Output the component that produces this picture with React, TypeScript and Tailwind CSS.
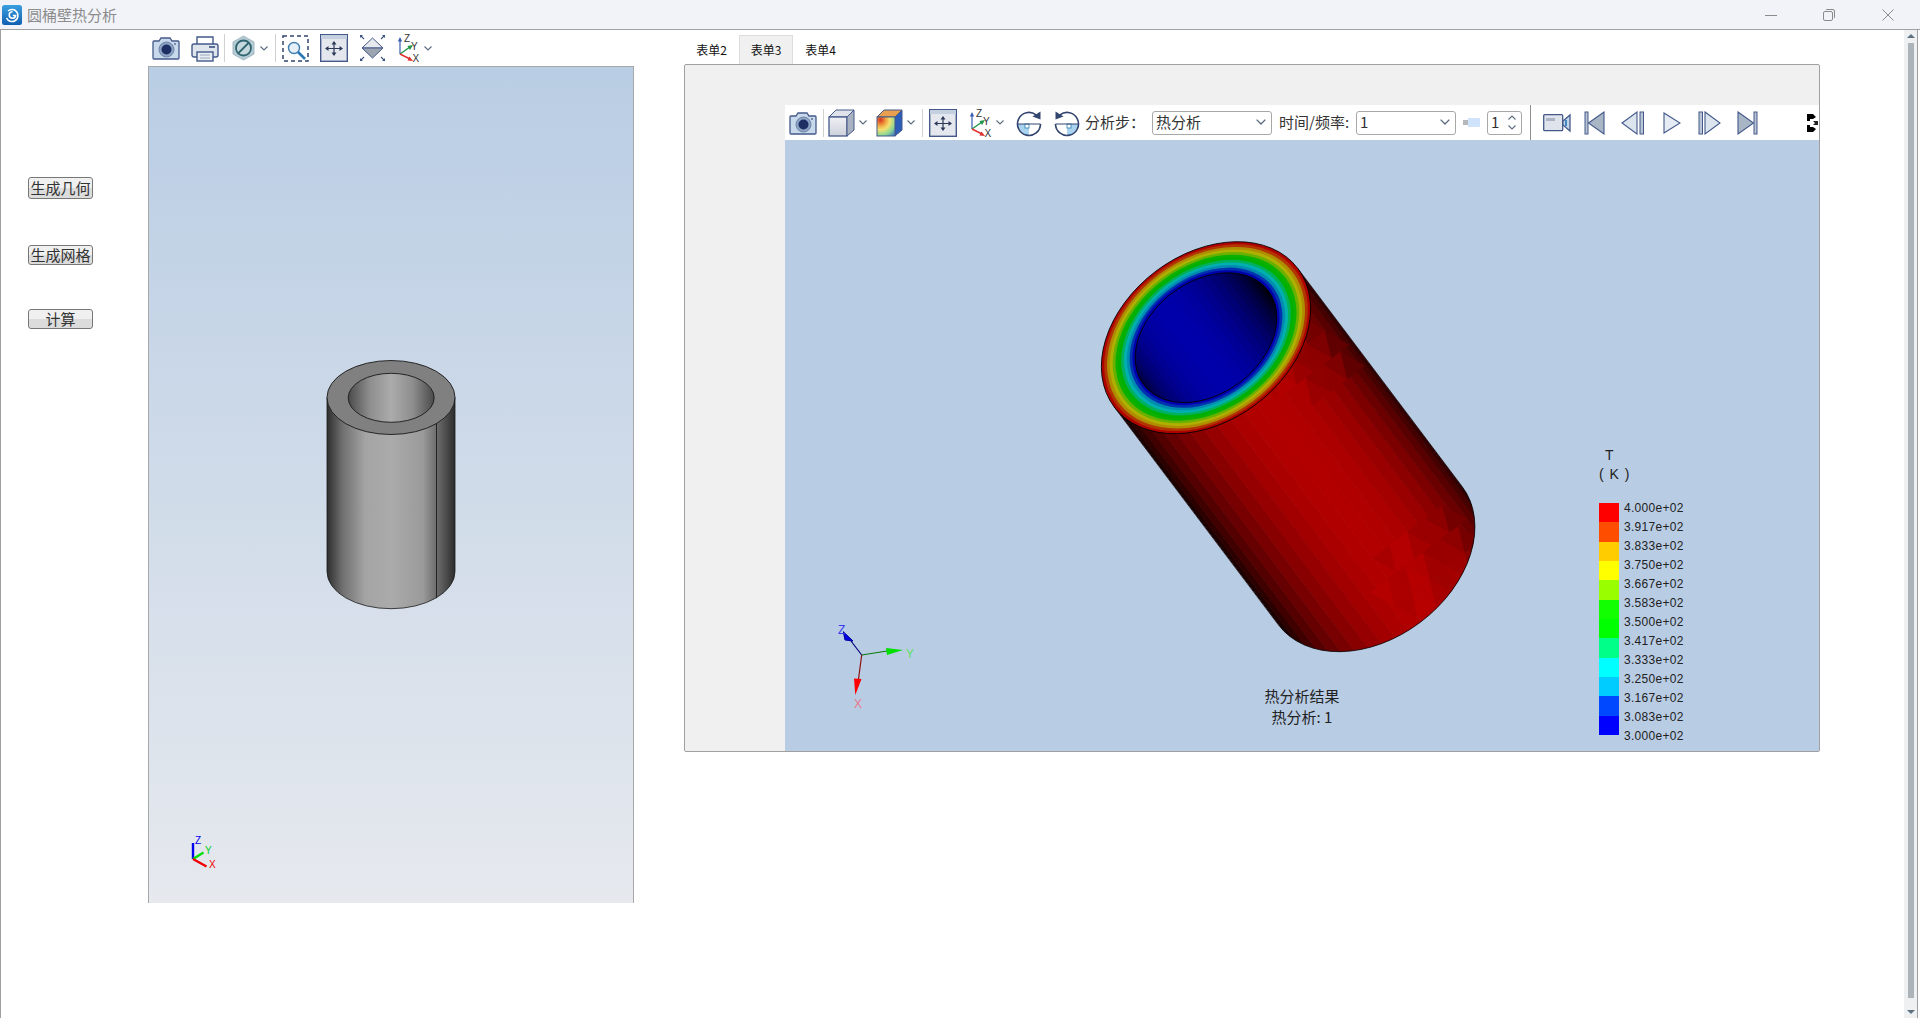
const NAVY = "#44598a"

function Chevron({ w = 8 }: { w?: number }) {
  return (
    <svg width={w} height={w * 0.625} viewBox="0 0 8 5" className="shrink-0">
      <path d="M0.5 0.5 L4 4 L7.5 0.5" fill="none" stroke="#5a6b80" strokeWidth="1.1" />
    </svg>
  )
}

function Sep() {
  return <div className="h-7 w-px shrink-0 bg-[#d0d0d0]" />
}

function Camera() {
  return (
    <svg width="28" height="24" viewBox="0 0 28 24" className="shrink-0">
      <path d="M2 5 H7 L9 2 H18 L20 5 H26 Q27 5 27 6 V22 Q27 23 26 23 H2 Q1 23 1 22 V6 Q1 5 2 5 Z" fill="#c9d9ec" stroke={NAVY} strokeWidth="1.3" />
      <circle cx="14.5" cy="13.5" r="7.5" fill="#8ea4c4" stroke="#6d83a8" />
      <circle cx="14.5" cy="13.5" r="5" fill="#1d2f63" />
      <circle cx="23" cy="8" r="1" fill="#5a7094" />
    </svg>
  )
}

function Printer() {
  return (
    <svg width="28" height="27" viewBox="0 0 28 27" className="shrink-0">
      <path d="M6 9 V2 H22 V9" fill="#fff" stroke={NAVY} strokeWidth="1.4" />
      <rect x="1" y="9" width="26" height="13" rx="2" fill="#dfe5ec" stroke={NAVY} strokeWidth="1.4" />
      <rect x="18" y="11" width="6" height="2" fill="#5a7094" />
      <rect x="6" y="17" width="16" height="9" fill="#e8edf2" stroke={NAVY} strokeWidth="1.4" />
      <path d="M9 20 H19 M9 23 H19" stroke="#9aa9bd" strokeWidth="1.2" />
    </svg>
  )
}

function Hex() {
  return (
    <svg width="23" height="26" viewBox="0 0 23 26" className="shrink-0">
      <path d="M11.5 1 L22 7 V19 L11.5 25 L1 19 V7 Z" fill="#b5cbd3" stroke="#a2bac4" />
      <circle cx="11.5" cy="13" r="7.5" fill="#c5d8de" stroke="#2f6470" strokeWidth="1.8" />
      <path d="M6.5 18 L16.5 8" stroke="#2f6470" strokeWidth="1.8" />
    </svg>
  )
}

function ZoomBox() {
  return (
    <svg width="27" height="27" viewBox="0 0 27 27" className="shrink-0">
      <rect x="1" y="1" width="25" height="25" fill="none" stroke="#33456f" strokeWidth="1.5" strokeDasharray="4 3" />
      <circle cx="12" cy="13" r="5.5" fill="#e6f0f8" stroke="#3f7db0" strokeWidth="1.4" />
      <path d="M16 17 L23 24" stroke="#2b78b5" strokeWidth="2.6" />
    </svg>
  )
}

function Fit() {
  return (
    <svg width="28" height="28" viewBox="0 0 28 28" className="shrink-0">
      <rect x="0.7" y="0.7" width="26.6" height="26.6" fill="#e4e8ee" stroke={NAVY} strokeWidth="1.4" />
      <rect x="1" y="1" width="26" height="4" fill="#c4cfdf" />
      <path d="M14 8 V21 M8 14.5 H20" stroke="#2c3a58" strokeWidth="1.2" />
      <path d="M14 7 L11.5 10.5 H16.5 Z M14 22 L11.5 18.5 H16.5 Z M5 14.5 L8.5 12 V17 Z M23 14.5 L19.5 12 V17 Z" fill="#2c3a58" />
    </svg>
  )
}

function Diamond() {
  return (
    <svg width="27" height="28" viewBox="0 0 27 28" className="shrink-0">
      <path d="M13.5 4 L24 14 H3 Z" fill="#e6e9ee" stroke={NAVY} />
      <path d="M3 14 H24 L13.5 24 Z" fill="#9da5b0" stroke={NAVY} />
      <path d="M1.5 1.5 L5 5 M25.5 1.5 L22 5 M1.5 26.5 L5 23 M25.5 26.5 L22 23" stroke="#3d5480" strokeWidth="1.1" />
      <path d="M1 1 H4 L1 4 Z M26 1 H23 L26 4 Z M1 27 H4 L1 24 Z M26 27 H23 L26 24 Z" fill="#3d5480" />
    </svg>
  )
}

function Triad() {
  return (
    <svg width="27" height="28" viewBox="0 0 27 28" className="shrink-0">
      <path d="M4 20 V6" stroke="#3a5db0" strokeWidth="1.2" />
      <path d="M4 3 L1.8 7.5 H6.2 Z" fill="#3a5db0" />
      <path d="M4 20 L14 13" stroke="#1f9448" strokeWidth="1.4" />
      <path d="M17 11 L11.5 12 L14 16 Z" fill="#1f9448" />
      <path d="M4 20 L14 25" stroke="#e03030" strokeWidth="1.4" />
      <path d="M17 27 L11.5 26.5 L13.5 22.5 Z" fill="#e03030" />
      <text x="8" y="8" fontSize="10" fill="#333" fontFamily="Liberation Sans, sans-serif">Z</text>
      <text x="15" y="15.5" fontSize="10" fill="#333" fontFamily="Liberation Sans, sans-serif">Y</text>
      <text x="16.5" y="27.5" fontSize="10" fill="#333" fontFamily="Liberation Sans, sans-serif">X</text>
    </svg>
  )
}

function Cube() {
  return (
    <svg width="27" height="28" viewBox="0 0 27 28" className="shrink-0">
      <defs>
        <linearGradient id="cubeFace" x1="0" y1="0" x2="0" y2="1">
          <stop offset="0%" stopColor="#eef0f4" />
          <stop offset="100%" stopColor="#cdd1da" />
        </linearGradient>
      </defs>
      <path d="M1 8 L8 1 H26 L19 8 Z" fill="#dfe2e8" stroke={NAVY} />
      <rect x="1" y="8" width="18" height="19" fill="url(#cubeFace)" stroke={NAVY} strokeWidth="1.3" />
      <path d="M19 8 L26 1 V21 L19 27 Z" fill="#a9b2c0" stroke={NAVY} />
    </svg>
  )
}

function ColorCube() {
  return (
    <svg width="27" height="28" viewBox="0 0 27 28" className="shrink-0">
      <defs>
        <radialGradient id="cc" cx="20%" cy="15%" r="115%">
          <stop offset="0%" stopColor="#d83020" />
          <stop offset="25%" stopColor="#f0a040" />
          <stop offset="45%" stopColor="#f4e070" />
          <stop offset="70%" stopColor="#90d890" />
          <stop offset="100%" stopColor="#3070d0" />
        </radialGradient>
      </defs>
      <path d="M1 8 L8 1 H26 L19 8 Z" fill="#e8a050" stroke={NAVY} />
      <path d="M19 8 L26 1 V21 L19 27 Z" fill="#2c5db8" stroke={NAVY} />
      <rect x="1" y="8" width="18" height="19" fill="url(#cc)" stroke={NAVY} />
    </svg>
  )
}

function Rotate({ flip }: { flip?: boolean }) {
  return (
    <svg width="26" height="28" viewBox="0 0 26 28" className={`shrink-0 ${flip ? "-scale-x-100" : ""}`}>
      <path d="M1.5 15 H13 V26.5 A11.5 11.5 0 0 1 1.5 15 Z" fill="#a9d3ee" />
      <rect x="9" y="15" width="4" height="4" fill="#fff" stroke="#2e7db5" strokeWidth="0.8" />
      <path d="M20 5.8 A11.5 11.5 0 1 0 24.5 15" fill="none" stroke="#33456f" strokeWidth="1.6" />
      <path d="M1.5 15 H24.5" stroke="#33456f" strokeWidth="1" />
      <path d="M24.5 2.5 L24.5 10.5 L16.5 7.5 Z" fill="#33456f" />
    </svg>
  )
}

function Video() {
  return (
    <svg width="29" height="20" viewBox="0 0 29 20" className="shrink-0">
      <rect x="0.7" y="1.7" width="19" height="16" rx="1" fill="#dfe4ec" stroke={NAVY} strokeWidth="1.3" />
      <rect x="3" y="5" width="9" height="3" fill="#aab4c4" />
      <path d="M20 8 L27 2 V18 L20 12 Z" fill="#c4d6e8" stroke={NAVY} strokeWidth="1.3" />
      <path d="M23 7 V13" stroke="#3f86c4" strokeWidth="2" />
    </svg>
  )
}

function Media({ kind }: { kind: "first" | "prev" | "play" | "next" | "last" }) {
  const bar = "#b9c4d4"
  if (kind === "first")
    return (
      <svg width="21" height="24" viewBox="0 0 21 24" className="shrink-0">
        <rect x="1" y="1" width="3" height="22" fill={bar} stroke={NAVY} />
        <path d="M4.5 12 L20 1 V23 Z" fill="#a8b6c6" stroke={NAVY} strokeWidth="1.1" />
      </svg>
    )
  if (kind === "prev")
    return (
      <svg width="24" height="24" viewBox="0 0 24 24" className="shrink-0">
        <path d="M1 12 L16 1 V23 Z" fill="#dce4ee" stroke={NAVY} strokeWidth="1.1" />
        <rect x="19" y="1" width="3.5" height="22" fill={bar} stroke={NAVY} />
      </svg>
    )
  if (kind === "play")
    return (
      <svg width="18" height="24" viewBox="0 0 18 24" className="shrink-0">
        <path d="M1 2 L17 12 L1 22 Z" fill="#e6ecf4" stroke={NAVY} strokeWidth="1.1" />
      </svg>
    )
  if (kind === "next")
    return (
      <svg width="23" height="24" viewBox="0 0 23 24" className="shrink-0">
        <rect x="1" y="1" width="3.5" height="22" fill={bar} stroke={NAVY} />
        <path d="M7 1 L22 12 L7 23 Z" fill="#dce4ee" stroke={NAVY} strokeWidth="1.1" />
      </svg>
    )
  return (
    <svg width="21" height="24" viewBox="0 0 21 24" className="shrink-0">
      <path d="M1 1 L16.5 12 L1 23 Z" fill="#a8b6c6" stroke={NAVY} strokeWidth="1.1" />
      <rect x="17" y="1" width="3" height="22" fill={bar} stroke={NAVY} />
    </svg>
  )
}

function Glitch() {
  return (
    <svg width="12" height="20" viewBox="0 0 12 20" className="shrink-0">
      <rect width="12" height="20" fill="#fff" />
      <path d="M0 1 H6 L9 4 L6 6 H3 V8 H0 Z M0 12 H3 V14 H6 L9 16 L6 19 H0 Z" fill="#000" />
      <path d="M6 8 H11 V12 H6 L8 10 Z" fill="#222" />
    </svg>
  )
}

function Logo() {
  return (
    <svg width="20" height="20" viewBox="0 0 20 20" className="ml-[2px] shrink-0">
      <defs>
        <linearGradient id="logo" x1="0" y1="0" x2="0" y2="1">
          <stop offset="0%" stopColor="#3aa0e0" />
          <stop offset="100%" stopColor="#0f5fb0" />
        </linearGradient>
      </defs>
      <rect width="20" height="20" rx="2.5" fill="url(#logo)" />
      <path d="M6 6 A6 6 0 1 1 4.5 13 M10.5 6.8 A3.2 3.2 0 1 0 13.6 10.5 L10.8 10.5" fill="none" stroke="#fff" strokeWidth="1.6" />
    </svg>
  )
}

function SelectBox({ text, className }: { text: string; className: string }) {
  return (
    <div className={`flex h-6 shrink-0 items-center justify-between rounded-[3px] border border-[#a8a8a8] bg-white pl-[3px] pr-[5px] text-[15px] text-[#333] ${className}`}>
      <span>{text}</span>
      <Chevron w={10} />
    </div>
  )
}

function SideButton({ label, className }: { label: string; className: string }) {
  return (
    <button className={`w-[65px] rounded-[3px] border border-[#777] bg-[linear-gradient(#f0f0f0_50%,#dcdcdc_50%)] pb-[2px] text-[15px] leading-none text-[#333] ${className}`}>
      {label}
    </button>
  )
}

// shade of a facet on the tube, darkens towards the silhouette
function shade(x: number, a: number, tilt: number) {
  const t = Math.asin(Math.max(-1, Math.min(1, x / a))) - tilt
  return Math.pow(Math.max(Math.cos(t), 0), 1.2)
}

function facets(a: number, n: number, tilt: number) {
  const out: { x: number; w: number; b: number }[] = []
  for (let i = 0; i < n; i++) {
    const t0 = -Math.PI / 2 + (Math.PI * i) / n
    const t1 = t0 + Math.PI / n
    const x0 = a * Math.sin(t0)
    const x1 = a * Math.sin(t1)
    out.push({ x: x0, w: x1 - x0 + 0.5, b: shade((x0 + x1) / 2, a, tilt) })
  }
  return out
}

const A = 115
const B = 83.3
const LEN = 273
const redOf = (b: number) => `rgb(${Math.min(186, Math.round(14 + 164 * b))},0,0)`

const RING_COLORS = ["#b00000", "#b03500", "#b08c00", "#b0b000", "#69b000", "#0cb000", "#00b000", "#00b05e", "#00b0b0", "#008cb0", "#0032b0", "#0000b0"]

function triangles() {
  const cells: { pts: string; fill: string }[] = []
  const rows = [
    { y0: 40, y1: 66, x0: 22, x1: 88 },
    { y0: 66, y1: 92, x0: 11, x1: 99 },
    { y0: 92, y1: 118, x0: 33, x1: 99 },
    { y0: 276, y1: 302, x0: 0, x1: 88 },
    { y0: 302, y1: 328, x0: -22, x1: 88 },
    { y0: 328, y1: 352, x0: -11, x1: 66 },
  ]
  rows.forEach((r, ri) => {
    const step = 22
    let n = ri
    for (let x = r.x0; x < r.x1; x += step) {
      const mx = x + step / 2
      const k = [1.04, 0.96, 1.02, 0.94][n % 4]
      const k2 = [0.97, 1.03, 0.95, 1.02][n % 4]
      n++
      cells.push({ pts: `${x},${r.y0} ${x + step},${r.y0} ${mx},${r.y1}`, fill: redOf(shade(mx, A, 0.08) * k) })
      cells.push({ pts: `${x + step},${r.y0} ${mx},${r.y1} ${mx + step},${r.y1}`, fill: redOf(shade(mx + step / 2, A, 0.08) * k2) })
    }
  })
  return cells
}

function HeatTube() {
  const outer = facets(A, 24, 0.08)
  const inner = facets(78, 30, -0.2)
  return (
    <g transform="translate(1206 337.7) rotate(-37)">
      <clipPath id="tubeBody">
        <path d={`M${-A} 0 L${-A} ${LEN} A${A} ${B} 0 0 0 ${A} ${LEN} L${A} 0 Z`} />
      </clipPath>
      <clipPath id="tubeHole">
        <ellipse cx="0" cy="0" rx="78" ry="56" />
      </clipPath>
      <g clipPath="url(#tubeBody)">
        {outer.map((s, i) => (
          <rect key={i} x={s.x} y="0" width={s.w} height={LEN + B + 2} fill={redOf(s.b)} />
        ))}
        {triangles().map((t, i) => (
          <polygon key={i} points={t.pts} fill={t.fill} />
        ))}
      </g>
      <path d={`M${A} ${LEN} A${A} ${B} 0 0 1 ${-A} ${LEN}`} fill="none" stroke="#000" strokeWidth="0.7" />
      <path d={`M${-A} 0 L${-A} ${LEN} M${A} 0 L${A} ${LEN}`} fill="none" stroke="#1a0000" strokeWidth="0.7" />
      {RING_COLORS.map((c, i) => (
        <ellipse key={c} cx="0" cy="0" rx={A * (1 - i * 0.027)} ry={B * (1 - i * 0.027)} fill={c} />
      ))}
      <ellipse cx="0" cy="0" rx={A} ry={B} fill="none" stroke="#000" strokeWidth="0.8" />
      <g clipPath="url(#tubeHole)">
        {inner.map((s, i) => (
          <rect key={i} x={s.x} y="-60" width={s.w} height="120" fill={`rgb(0,0,${Math.round(10 + 160 * s.b)})`} />
        ))}
      </g>
      <ellipse cx="0" cy="0" rx="78" ry="56" fill="none" stroke="#000" strokeWidth="0.8" />
    </g>
  )
}

const LEGEND_COLORS = ["#ff0000", "#ff4d00", "#ffcc00", "#ffff00", "#99ff00", "#11ff00", "#00ff00", "#00ff88", "#00ffff", "#00ccff", "#0048ff", "#0000ff"]
const LEGEND_LABELS = ["4.000e+02", "3.917e+02", "3.833e+02", "3.750e+02", "3.667e+02", "3.583e+02", "3.500e+02", "3.417e+02", "3.333e+02", "3.250e+02", "3.167e+02", "3.083e+02", "3.000e+02"]

function ResultView() {
  return (
    <div className="relative min-h-0 flex-1 bg-[#b8cce4]">
      <svg viewBox="785 140 1034 611" className="block h-full w-full">
        <HeatTube />
        <path d="M861.7 655 L851 641" stroke="#00007a" strokeWidth="1.2" />
        <path d="M843.3 631.7 L845 640 L853 641 Z" fill="#0000e0" stroke="#0000a0" />
        <path d="M861.7 655 L887 651" stroke="#0a7a0a" strokeWidth="1.2" />
        <path d="M903 650 L886 648 L887 655 Z" fill="#00e000" />
        <path d="M861.7 655 L858.5 679" stroke="#8a1010" strokeWidth="1.2" />
        <path d="M855.3 695 L854 678.5 L861.5 679 Z" fill="#ff0000" />
        <text x="838" y="634" fontSize="12" fill="#3a3af0" fontFamily="Liberation Sans, sans-serif">Z</text>
        <text x="906" y="658" fontSize="12" fill="#5fe05f" fontFamily="Liberation Sans, sans-serif">Y</text>
        <text x="854" y="708" fontSize="12" fill="#e87a8a" fontFamily="Liberation Sans, sans-serif">X</text>
      </svg>
      <div className="absolute left-[814px] top-[307px] font-['Liberation_Sans',sans-serif] text-[#222]">
        <div className="ml-[6px] text-[14px] leading-[17px]">T</div>
        <div className="text-[14px] leading-[20px] tracking-[1px]">( K )</div>
        <div className="mt-[19px] flex items-start">
          <div className="flex h-[232px] w-5 flex-col">
            {LEGEND_COLORS.map((c) => (
              <div key={c} className="flex-1" style={{ background: c }} />
            ))}
          </div>
          <div className="-mt-[4px] ml-[5px] flex flex-col">
            {LEGEND_LABELS.map((l) => (
              <div key={l} className="h-[19px] text-[12px] leading-[19px] tracking-[0.3px]">{l}</div>
            ))}
          </div>
        </div>
      </div>
      <div className="absolute inset-x-0 top-[545px] text-center text-[15px] leading-[21px] text-[#222]">
        <div>热分析结果</div>
        <div>热分析: 1</div>
      </div>
    </div>
  )
}

function GeometryView() {
  return (
    <div className="h-[837px] w-[486px] border-x border-t border-[#a8a8a8] bg-[linear-gradient(#b9cde4,#e6e9ee)]">
      <svg viewBox="149 67 484 836" className="block h-full w-full">
        <defs>
          <linearGradient id="steel" x1="0" y1="0" x2="1" y2="0">
            <stop offset="0%" stopColor="#2e2e2e" />
            <stop offset="12%" stopColor="#6f6f6f" />
            <stop offset="30%" stopColor="#a4a4a4" />
            <stop offset="50%" stopColor="#ababab" />
            <stop offset="75%" stopColor="#9a9a9a" />
            <stop offset="90%" stopColor="#5a5a5a" />
            <stop offset="100%" stopColor="#2c2c2c" />
          </linearGradient>
          <linearGradient id="bore" x1="0" y1="0" x2="1" y2="0">
            <stop offset="0%" stopColor="#4a4a4a" />
            <stop offset="25%" stopColor="#8e8e8e" />
            <stop offset="50%" stopColor="#ababab" />
            <stop offset="75%" stopColor="#8e8e8e" />
            <stop offset="100%" stopColor="#4a4a4a" />
          </linearGradient>
        </defs>
        <path d="M327 397.5 V571.7 A64 37 0 0 0 455 571.7 V397.5 Z" fill="url(#steel)" stroke="#1a1a1a" strokeWidth="0.8" />
        <ellipse cx="391" cy="397.5" rx="64" ry="37" fill="#808080" stroke="#1a1a1a" strokeWidth="0.9" />
        <ellipse cx="391.2" cy="397.8" rx="43" ry="24.5" fill="url(#bore)" stroke="#1a1a1a" strokeWidth="0.9" />
        <path d="M436.5 423 V598" stroke="#1a1a1a" strokeWidth="0.9" />
        <path d="M193 859 V843" stroke="#0000f0" strokeWidth="2.4" />
        <path d="M193 859 L203.5 852.5" stroke="#00e000" strokeWidth="2.4" />
        <path d="M193 859 L206.5 866.5" stroke="#f00000" strokeWidth="2.4" />
        <text x="195" y="844" fontSize="10" fill="#0000f0" fontFamily="Liberation Sans, sans-serif">Z</text>
        <text x="205" y="854" fontSize="10" fill="#00d020" fontFamily="Liberation Sans, sans-serif">Y</text>
        <text x="209" y="868" fontSize="10" fill="#f00000" fontFamily="Liberation Sans, sans-serif">X</text>
      </svg>
    </div>
  )
}

export default function App() {
  return (
    <div className="flex h-screen w-full flex-col overflow-hidden bg-white font-['Noto_Sans_CJK_SC',sans-serif]">
      <div className="flex h-[30px] shrink-0 items-center border-b border-[#a0a0a0] bg-[#f1f3f9]">
        <Logo />
        <span className="ml-[5px] text-[15px] leading-none text-[#8c8c8c]">圆桶壁热分析</span>
        <div className="ml-auto flex items-center">
          <svg width="12" height="12" viewBox="0 0 12 12" className="mr-[46px]"><path d="M0 6.5 H12" stroke="#8a8a8a" /></svg>
          <svg width="12" height="12" viewBox="0 0 12 12" className="mr-[47px]">
            <rect x="0.5" y="2.5" width="9" height="9" rx="1.5" fill="none" stroke="#8a8a8a" />
            <path d="M3 1 Q3 0.5 4 0.5 H10 Q11.5 0.5 11.5 2 V8 Q11.5 9 11 9" fill="none" stroke="#8a8a8a" />
          </svg>
          <svg width="12" height="12" viewBox="0 0 12 12" className="mr-[26px]"><path d="M0.5 0.5 L11.5 11.5 M11.5 0.5 L0.5 11.5" stroke="#8a8a8a" /></svg>
        </div>
      </div>

      <div className="flex min-h-0 flex-1 border-l border-[#a0a0a0]">
        <div className="flex w-[147px] shrink-0 flex-col items-start pl-[27px] pt-[147px]">
          <SideButton label="生成几何" className="h-[22px]" />
          <SideButton label="生成网格" className="mt-[46px] h-5" />
          <SideButton label="计算" className="mt-[44px] h-5" />
        </div>

        <div className="w-[486px] shrink-0">
          <div className="flex h-[36px] items-center pl-[4px]">
            <Camera />
            <div className="ml-[11px]"><Printer /></div>
            <div className="ml-[5px]"><Sep /></div>
            <div className="ml-[7px]"><Hex /></div>
            <div className="ml-[5px]"><Chevron /></div>
            <div className="ml-[7px]"><Sep /></div>
            <div className="ml-[6px]"><ZoomBox /></div>
            <div className="ml-[11px]"><Fit /></div>
            <div className="ml-[11px]"><Diamond /></div>
            <div className="ml-[10px]"><Triad /></div>
            <div className="ml-[1px]"><Chevron /></div>
          </div>
          <GeometryView />
        </div>

        <div className="ml-[50px] w-[1136px] shrink-0 pt-[5px]">
          <div className="flex h-[29px] text-[12px] text-[#111]">
            <div className="flex w-[55px] items-center justify-center">表单2</div>
            <div className="flex w-[54px] items-center justify-center border border-b-0 border-[#dcdcdc] bg-[#f0f0f0]">表单3</div>
            <div className="flex w-[55px] items-center justify-center">表单4</div>
          </div>
          <div className="flex h-[688px] flex-col rounded-[2px] border border-[#a0a0a0] bg-[#f0f0f0] pl-[100px] pt-[40px]">
            <div className="flex h-[35px] shrink-0 items-center overflow-hidden bg-white pl-[4px] text-[15px] text-[#333]">
              <Camera />
              <div className="ml-[6px]"><Sep /></div>
              <div className="ml-[4px]"><Cube /></div>
              <div className="ml-[4px]"><Chevron /></div>
              <div className="ml-[9px]"><ColorCube /></div>
              <div className="ml-[4px]"><Chevron /></div>
              <div className="ml-[7px]"><Sep /></div>
              <div className="ml-[6px]"><Fit /></div>
              <div className="ml-[11px]"><Triad /></div>
              <div className="ml-[1px]"><Chevron /></div>
              <div className="ml-[12px]"><Rotate /></div>
              <div className="ml-[12px]"><Rotate flip /></div>
              <span className="ml-[5px] w-[55px] shrink-0 whitespace-nowrap">分析步：</span>
              <SelectBox text="热分析" className="ml-[12px] w-[120px]" />
              <span className="ml-[7px] w-[70px] shrink-0 whitespace-nowrap">时间/频率:</span>
              <SelectBox text="1" className="ml-[7px] w-[100px]" />
              <div className="ml-[7px] flex shrink-0 items-center">
                <div className="h-[5px] w-[5px] bg-[#b4b8bc]" />
                <div className="h-[9px] w-[12px] bg-[#cfe3fb]" />
              </div>
              <div className="ml-[7px] flex h-6 w-[35px] shrink-0 items-center justify-between rounded-[3px] border border-[#a8a8a8] pl-[3px] pr-[5px]">
                <span>1</span>
                <div className="flex flex-col gap-[5px]">
                  <div className="rotate-180"><Chevron /></div>
                  <Chevron />
                </div>
              </div>
              <div className="ml-[8px] h-[35px] w-px shrink-0 bg-[#909090]" />
              <div className="ml-[12px]"><Video /></div>
              <div className="ml-[12px]"><Media kind="first" /></div>
              <div className="ml-[16px]"><Media kind="prev" /></div>
              <div className="ml-[18px]"><Media kind="play" /></div>
              <div className="ml-[17px]"><Media kind="next" /></div>
              <div className="ml-[16px]"><Media kind="last" /></div>
              <div className="ml-[49px]"><Glitch /></div>
            </div>
            <ResultView />
          </div>
        </div>

        <div className="ml-auto mr-[2px] flex w-[14px] shrink-0 flex-col items-center border-r border-[#a0a0a0] bg-[#eef0f2]">
          <div className="mt-[4px] h-0 w-0 border-x-[4px] border-b-[4px] border-x-transparent border-b-[#5d7080]" />
          <div className="mt-[5px] w-[6px] flex-1 bg-[#adb4b9]" />
          <div className="mb-[4px] mt-[12px] h-0 w-0 border-x-[4px] border-t-[4px] border-x-transparent border-t-[#5d7080]" />
        </div>
      </div>
    </div>
  )
}
